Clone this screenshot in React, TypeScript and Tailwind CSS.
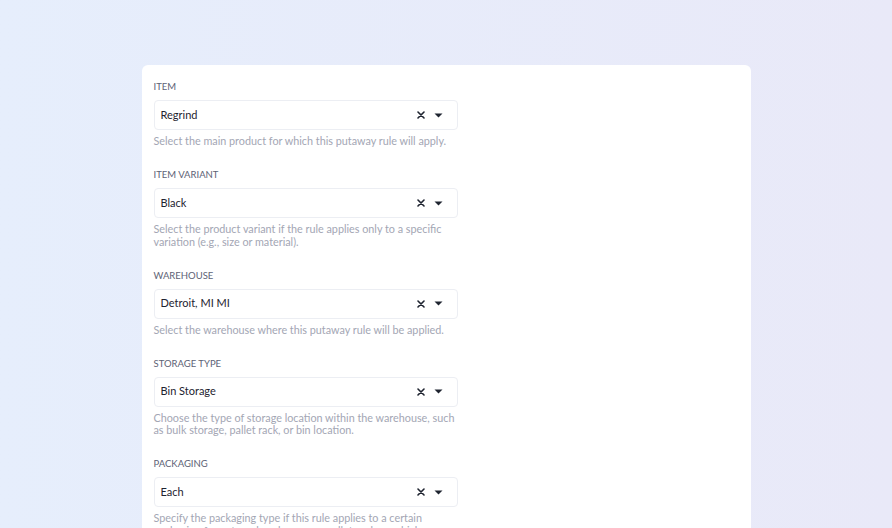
const fields = [
	{
		label: "Item",
		value: "Regrind",
		help: "Select the main product for which this putaway rule will apply.",
	},
	{
		label: "Item Variant",
		value: "Black",
		help: "Select the product variant if the rule applies only to a specific variation (e.g., size or material).",
	},
	{
		label: "Warehouse",
		value: "Detroit, MI MI",
		help: "Select the warehouse where this putaway rule will be applied.",
	},
	{
		label: "Storage Type",
		value: "Bin Storage",
		help: "Choose the type of storage location within the warehouse, such as bulk storage, pallet rack, or bin location.",
	},
	{
		label: "Packaging",
		value: "Each",
		help: "Specify the packaging type if this rule applies to a certain packaging format, such as box, case, pallet, or bag, which you need.",
	},
];

function ClearIcon() {
	return (
		<svg width="8" height="8" viewBox="0 0 8 8" aria-hidden="true">
			<path
				d="M1 1L7 7M7 1L1 7"
				stroke="#1f2430"
				strokeWidth="1.6"
				strokeLinecap="round"
			/>
		</svg>
	);
}

function CaretIcon() {
	return (
		<svg width="9" height="5" viewBox="0 0 9 5" aria-hidden="true">
			<path d="M0.5 0.5H8.5L4.5 4.5Z" fill="#1f2430" />
		</svg>
	);
}

function SelectField({
	label,
	value,
	help,
}: {
	label: string;
	value: string;
	help: string;
}) {
	return (
		<div className="w-[304px]">
			<p className="text-[9.5px] leading-[12px] uppercase text-[#5d6275]">
				{label}
			</p>
			<div className="mt-[7px] flex h-[30px] items-center rounded-[4px] border border-[#eceef3] bg-white pl-[6px] pr-[14px]">
				<span className="flex-1 text-[11px] text-[#1e2330]">{value}</span>
				<span className="flex items-center gap-[9px]">
					<ClearIcon />
					<CaretIcon />
				</span>
			</div>
			<p className="mt-[5px] text-[10.8px] leading-[12.5px] text-[#a3a6b4]">
				{help}
			</p>
		</div>
	);
}

export default function App() {
	return (
		<div
			className="h-[528px] overflow-hidden bg-gradient-to-r from-[#e6eefc] to-[#e9e9f8] pt-[65px]"
			style={{ fontFamily: "Lato, 'Noto Sans', sans-serif" }}
		>
			<div className="mx-auto h-[600px] w-[609px] rounded-[6px] bg-white px-[12px] pt-[16px]">
				<div className="flex flex-col gap-[21.5px]">
					{fields.map((field) => (
						<SelectField key={field.label} {...field} />
					))}
				</div>
			</div>
		</div>
	);
}
